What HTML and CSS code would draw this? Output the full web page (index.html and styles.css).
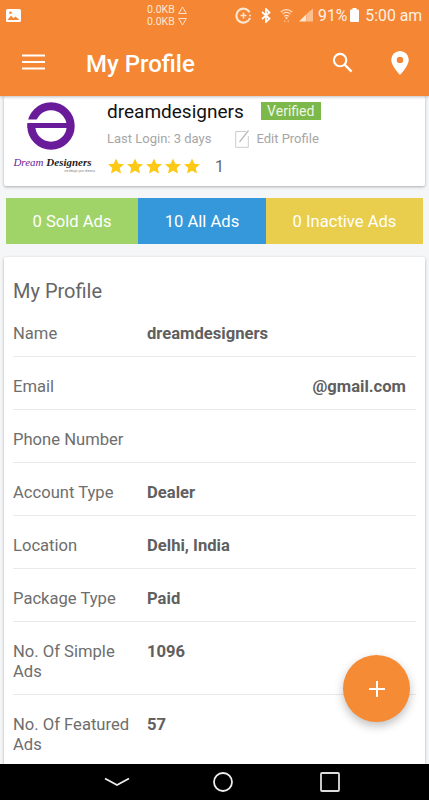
FILE: index.html
```html
<!DOCTYPE html>
<html lang="en">
<head>
  <meta charset="UTF-8" />
  <meta name="viewport" content="width=device-width, initial-scale=1.0"/>
  <title>My Profile</title>
  <link rel="stylesheet" href="styles.css">
</head>
<body>
  <div class="phone">
    <header class="top">
      <div class="status">
        <svg class="st-image" width="15" height="13" viewBox="0 0 15 13"><rect width="15" height="13" rx="1.5" fill="#fff"/><path d="M1.5 11 5 6.5l2.500 2.800L9.500 7.500 13.500 11z" fill="#f58634"/><circle cx="4.500" cy="3.800" r="1.300" fill="#f58634"/></svg>
        <div class="speed">
          <div class="speed-row">0.0KB <svg width="9" height="8" viewBox="0 0 9 8"><path d="M4.500 1 8.300 7.500H.7z" fill="none" stroke="#fff" stroke-opacity=".75"/></svg></div>
          <div class="speed-row">0.0KB <svg width="9" height="8" viewBox="0 0 9 8"><path d="M4.500 7 8.300.5H.7z" fill="none" stroke="#fff" stroke-opacity=".75"/></svg></div>
        </div>
        <svg class="st-sync" width="17" height="17" viewBox="0 0 17 17"><path d="M14.500 5.200A7 7 0 1 0 15 11" fill="none" stroke="#fde6d0" stroke-width="2.200"/><path d="M8.500 5.500v6M5.500 8.500h6" stroke="#fde6d0" stroke-width="1.600"/><circle cx="15" cy="8.500" r="1" fill="#fde6d0"/></svg>
        <svg class="st-bt" width="10" height="15" viewBox="0 0 10 15"><path d="M1 4l7.500 6.500L5 14V1l3.500 3.500L1 11" fill="none" stroke="#fff" stroke-width="1.700"/></svg>
        <svg class="st-wifi" width="13" height="16" viewBox="0 0 15 16"><path d="M1 4.500a9 9 0 0 1 13 0M3 7a6.200 6.200 0 0 1 9 0M5 9.500a3.300 3.300 0 0 1 5 0" fill="none" stroke="#fde0c6" stroke-width="1.400"/><circle cx="7.500" cy="11.500" r="1.300" fill="#fde0c6"/><path d="M5.500 14v2M9.500 14v2" stroke="#fbc79e" stroke-width="1.200"/></svg>
        <svg class="st-signal" width="14" height="14" viewBox="0 0 15 14"><path d="M15 0v14H8.500V5.500z" fill="#fbbf92"/><path d="M8 6v8H0z" fill="#fde6d0"/></svg>
        <span class="st-text st-pct">91%</span>
        <svg class="st-batt" width="9" height="14" viewBox="0 0 9 14"><rect x="2.500" width="4" height="2" fill="#fff"/><rect y="1.500" width="9" height="12.500" rx="1" fill="#fff"/></svg>
        <span class="st-text st-time">5:00 am</span>
      </div>
      <div class="appbar">
        <svg class="menu" width="23" height="16" viewBox="0 0 23 16"><path d="M0 1.500h23M0 8h23M0 14.500h23" stroke="#fff" stroke-width="2.200"/></svg>
        <h1>My Profile</h1>
        <svg class="search" width="21" height="21" viewBox="0 0 22 22"><circle cx="8.500" cy="8.500" r="6.500" fill="none" stroke="#fff" stroke-width="2.200"/><path d="M13.500 13.500l7 7" stroke="#fff" stroke-width="2.400"/></svg>
        <svg class="pin" width="18" height="24" viewBox="0 0 18 24"><path fill-rule="evenodd" d="M9 0a8.800 8.800 0 0 1 8.800 8.800C17.800 15 9 24 9 24S.2 15 .2 8.800A8.800 8.800 0 0 1 9 0zm0 5.700a3.200 3.200 0 1 0 0 6.400 3.200 3.200 0 0 0 0-6.400z" fill="#fff"/></svg>
      </div>
    </header>

    <main class="content">
      <section class="card user">
        <div class="logo">
          <svg width="50" height="50" viewBox="0 0 50 50"><circle cx="25" cy="25" r="19.700" fill="none" stroke="#6a1b9a" stroke-width="8"/><rect x="0" y="18.500" width="11" height="3.500" fill="#fff"/><rect x="1.500" y="22" width="46" height="5" fill="#6a1b9a"/></svg>
          <div class="logo-name"><span class="purple">Dream</span> Designers</div>
          <div class="logo-tag">we design your dreams</div>
        </div>
        <div class="user-info">
          <div class="name-row">
            <span class="username">dreamdesigners</span>
            <span class="verified">Verified</span>
          </div>
          <div class="login-row">
            <span>Last Login: 3 days</span>
            <span class="edit">
              <svg width="15" height="19" viewBox="0 0 15 19"><path d="M11 2.500H.7v15.800h12.600V7" fill="none" stroke="#ccc"/><path d="M4.500 13 13.500 1.500" stroke="#bbb" stroke-width="1.300"/></svg>
              Edit Profile
            </span>
          </div>
          <div class="rating">
            <svg class="stars" width="94" height="18" viewBox="0 0 94 18"><defs><path id="star" d="M9 1.500l2.300 5.200 5.700.5-4.300 3.800 1.300 5.600L9 13.700l-5 2.900 1.300-5.600L1 7.200l5.700-.5z" fill="#fbc916"/></defs><use href="#star"/><use href="#star" x="19"/><use href="#star" x="38"/><use href="#star" x="57"/><use href="#star" x="76"/></svg>
            <span class="count">1</span>
          </div>
        </div>
      </section>

      <nav class="tabs">
        <div class="tab green">0 Sold Ads</div>
        <div class="tab blue">10 All Ads</div>
        <div class="tab yellow">0 Inactive Ads</div>
      </nav>

      <section class="card details">
        <h2>My Profile</h2>
        <div class="row"><span class="label">Name</span><span class="value">dreamdesigners</span></div>
        <div class="row"><span class="label">Email</span><span class="value right">@gmail.com</span></div>
        <div class="row"><span class="label">Phone Number</span><span class="value"></span></div>
        <div class="row"><span class="label">Account Type</span><span class="value">Dealer</span></div>
        <div class="row"><span class="label">Location</span><span class="value">Delhi, India</span></div>
        <div class="row"><span class="label">Package Type</span><span class="value">Paid</span></div>
        <div class="row"><span class="label">No. Of Simple Ads</span><span class="value">1096</span></div>
        <div class="row"><span class="label">No. Of Featured Ads</span><span class="value">57</span></div>
      </section>

      <button class="fab"><svg width="16" height="16" viewBox="0 0 16 16"><path d="M8 0v16M0 8h16" stroke="#fff" stroke-width="2"/></svg></button>
    </main>

    <footer class="navbar">
      <svg width="26" height="10" viewBox="0 0 26 10"><path d="M1 1.500 13 8l12-6.500" fill="none" stroke="#eee" stroke-width="1.800"/></svg>
      <svg width="20" height="20" viewBox="0 0 20 20"><circle cx="10" cy="10" r="9" fill="none" stroke="#eee" stroke-width="1.800"/></svg>
      <svg class="nav-square" width="20" height="20" viewBox="0 0 20 20"><rect x="1" y="1" width="18" height="18" rx="1" fill="none" stroke="#ddd" stroke-width="1.800"/></svg>
    </footer>
  </div>
</body>
</html>
```

FILE: styles.css
```css
* {
  margin: 0;
  padding: 0;
  box-sizing: border-box;
}
html, body {
  width: 100%;
  height: 100%;
  overflow: hidden;
  font-family: Roboto, sans-serif;
}
.phone {
  display: flex;
  flex-direction: column;
  height: 800px;
  background: #f5f6f8;
}

/* status bar + toolbar */
.top {
  height: 96px;
  flex-shrink: 0;
  background: #f58634;
  color: #fff;
  box-shadow: 0 1px 3px rgba(0,0,0,0.25);
  position: relative;
  z-index: 2;
}
.status {
  display: flex;
  align-items: center;
  height: 30px;
  padding-left: 6px;
}
.st-image { margin-right: 126px; }
.speed {
  font-size: 10.500px;
  line-height: 12px;
  width: 88px;
  color: #fde6d0;
  padding-top: 2px;
}
.speed-row {
  display: flex;
  align-items: center;
  gap: 3px;
}
.st-sync { margin-right: 9px; }
.st-bt { margin-right: 9px; }
.st-wifi { margin-right: 6px; }
.st-signal { margin-right: 5px; }
.st-text {
  font-size: 15.800px;
  color: #fdf0e4;
  white-space: nowrap;
}
.st-batt { margin: 0 6px 0 3px; }
.appbar {
  display: flex;
  align-items: center;
  height: 66px;
  padding: 2px 20px 0 22px;
}
.menu { margin: 0 41px 4px 0; }
.appbar h1 {
  font-size: 24px;
  font-weight: 500;
  flex-grow: 1;
}
.search { margin: 0 38px 4px 0; }
.pin { margin-bottom: 2px; }

.content {
  flex-grow: 1;
  min-height: 0;
  overflow: hidden;
  position: relative;
}
.card {
  background: #fff;
  margin: 0 4px;
  border-radius: 2px;
  box-shadow: 0 1px 3px rgba(0,0,0,0.3);
}

/* user card */
.user {
  display: flex;
  height: 90px;
}
.logo {
  width: 103px;
  flex-shrink: 0;
  text-align: center;
  padding: 5px 9px 0 0;
}
.logo svg {
  display: block;
  margin: 0 auto;
}
.logo-name {
  font-family: "Liberation Serif", serif;
  font-style: italic;
  font-weight: bold;
  font-size: 11px;
  line-height: 14px;
  color: #222;
  margin-top: 4px;
  padding-left: 3px;
  white-space: nowrap;
}
.purple {
  color: #6a1b9a;
  font-weight: normal;
}
.logo-tag {
  font-size: 3px;
  line-height: 4px;
  color: #888;
  text-align: right;
  padding-right: 3px;
}
.user-info {
  padding-top: 3px;
}
.name-row {
  display: flex;
  align-items: center;
  height: 24px;
}
.username {
  font-size: 19px;
  color: #111;
}
.verified {
  background: #7cb84a;
  color: #eef6e4;
  font-size: 14px;
  line-height: 18px;
  width: 60px;
  text-align: center;
  margin-left: 17px;
  margin-bottom: 1px;
}
.login-row {
  display: flex;
  align-items: center;
  height: 30px;
  font-size: 13px;
  color: #a6a6a6;
}
.edit {
  display: flex;
  align-items: center;
  gap: 6px;
  margin-left: 24px;
}
.rating {
  display: flex;
  align-items: center;
  height: 26px;
}
.count {
  font-size: 16px;
  color: #666;
  margin-left: 14px;
}

/* ad counters */
.tabs {
  display: flex;
  height: 46px;
  margin: 12px 6px 13px;
  color: #fff;
  font-size: 16.600px;
}
.tab {
  display: flex;
  align-items: center;
  justify-content: center;
}
.green { width: 132px; background: #a0d468; }
.blue { width: 128px; background: #3498db; }
.yellow { flex-grow: 1; background: #e9cd4c; }

/* profile list */
.details {
  padding: 21px 9px 0;
  height: 520px;
}
.details h2 {
  font-size: 20px;
  font-weight: 400;
  color: #666;
  line-height: 26px;
}
.row {
  display: flex;
  padding: 20px 0 12px;
  font-size: 16.600px;
  line-height: 20px;
  border-bottom: 1px solid #eaeaea;
}
.row:last-child { border-bottom: 0; }
.label {
  width: 134px;
  flex-shrink: 0;
  color: #6e6e6e;
  padding-right: 10px;
}
.value {
  flex-grow: 1;
  color: #5f5f5f;
  font-weight: 700;
}
.value.right {
  text-align: right;
  padding-right: 10px;
}

.fab {
  position: absolute;
  right: 19px;
  bottom: 42px;
  width: 67px;
  height: 67px;
  border: 0;
  border-radius: 50%;
  background: #f58b35;
  box-shadow: 0 4px 10px rgba(0,0,0,0.25);
  display: flex;
  align-items: center;
  justify-content: center;
}

.navbar {
  flex-shrink: 0;
  height: 36px;
  background: #000;
  display: flex;
  align-items: center;
  padding-left: 104px;
  gap: 83px;
  position: relative;
  z-index: 2;
}
.nav-square { margin-left: 4px; }
```
